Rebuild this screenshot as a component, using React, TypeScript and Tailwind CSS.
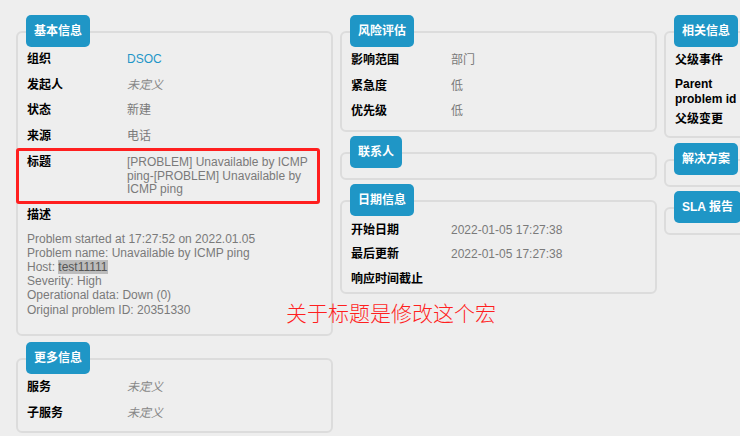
import React from "react";

function Section({
  title,
  className = "",
  cardClass = "",
  children,
}: {
  title: string;
  className?: string;
  cardClass?: string;
  children?: React.ReactNode;
}) {
  return (
    <div className={className}>
      <div className="relative z-10 ml-[10px] flex h-[32px] w-fit items-center rounded-[5px] bg-[#1f96c6] px-[8px] text-[12px] font-bold leading-none text-white">
        {title}
      </div>
      <div className={`-mt-[16px] rounded-[6px] border-2 border-[#dcdcdc] px-[9px] ${cardClass}`}>
        {children}
      </div>
    </div>
  );
}

function Row({
  label,
  children,
  rowClass = "py-[6px] leading-[13.7px]",
}: {
  label: React.ReactNode;
  children?: React.ReactNode;
  rowClass?: string;
}) {
  return (
    <div className={`flex ${rowClass}`}>
      <div className="w-[100px] shrink-0 pr-[14px] font-bold text-black">{label}</div>
      <div className="min-w-0 flex-1 text-[#7a7a7a]">{children}</div>
    </div>
  );
}

const Undef = () => <span className="italic text-[#888888]">未定义</span>;

export default function App() {
  return (
    <div className="relative h-[436px] w-[740px] overflow-hidden bg-[#eeeeee] font-['Liberation_Sans','Noto_Sans_CJK_SC',sans-serif] text-[12px]">
      <div className="flex gap-[7px] pl-[16px] pt-[15px]">
        {/* Left column */}
        <div className="w-[317px] shrink-0">
          <Section title="基本信息" cardClass="pt-[14px] pb-[17px]">
            <Row label="组织">
              <span className="text-[#1e96c8]">DSOC</span>
            </Row>
            <Row label="发起人">
              <Undef />
            </Row>
            <Row label="状态">新建</Row>
            <Row label="来源">电话</Row>
            <Row label="标题">
              [PROBLEM] Unavailable by ICMP ping-[PROBLEM] Unavailable by ICMP ping
            </Row>
            <Row label="描述" />
            <div className="mt-[3px] leading-[14.2px] text-[#7a7a7a]">
              <div>Problem started at 17:27:52 on 2022.01.05</div>
              <div>Problem name: Unavailable by ICMP ping</div>
              <div>
                Host: <span className="bg-[#bcbcbc] text-[#555555]">test11111</span>
              </div>
              <div>Severity: High</div>
              <div>Operational data: Down (0)</div>
              <div>Original problem ID: 20351330</div>
            </div>
          </Section>
          <Section title="更多信息" className="mt-[6px]" cardClass="pt-[15px] pb-[5px]">
            <Row label="服务">
              <Undef />
            </Row>
            <Row label="子服务">
              <Undef />
            </Row>
          </Section>
        </div>

        {/* Middle column */}
        <div className="w-[317px] shrink-0">
          <Section title="风险评估" cardClass="pt-[15px] pb-[5px]">
            <Row label="影响范围">部门</Row>
            <Row label="紧急度">低</Row>
            <Row label="优先级">低</Row>
          </Section>
          <Section title="联系人" className="mt-[4px]" cardClass="h-[28px]" />
          <Section title="日期信息" className="mt-[4px]" cardClass="pt-[16px] pb-[1px]">
            <Row label="开始日期" rowClass="py-[5px] leading-[14.3px]">
              2022-01-05 17:27:38
            </Row>
            <Row label="最后更新" rowClass="py-[5px] leading-[14.3px]">
              2022-01-05 17:27:38
            </Row>
            <Row label={<span className="whitespace-nowrap">响应时间截止</span>} rowClass="py-[5px] leading-[14.3px]" />
          </Section>
        </div>

        {/* Right column */}
        <div className="w-[317px] shrink-0">
          <Section title="相关信息" cardClass="pt-[15px] pb-[4px]">
            <Row label="父级事件" />
            <Row label="Parent problem id" rowClass="pt-[3px] pb-0 leading-[15px]" />
            <Row label="父级变更" />
          </Section>
          <Section title="解决方案" className="mt-[5px]" cardClass="h-[28px]" />
          <Section title="SLA 报告" className="mt-[4px]" cardClass="h-[28px]" />
        </div>
      </div>

      {/* Annotation overlays */}
      <div className="pointer-events-none absolute left-[16px] top-[148px] h-[56px] w-[304px] rounded-[3px] border-[3px] border-[#ff1f1f]" />
      <div className="pointer-events-none absolute left-[286px] top-[302px] whitespace-nowrap font-['Noto_Sans_CJK_SC',sans-serif] text-[21px] font-light leading-[21px] text-[#ff1f1f]">
        关于标题是修改这个宏
      </div>
    </div>
  );
}
